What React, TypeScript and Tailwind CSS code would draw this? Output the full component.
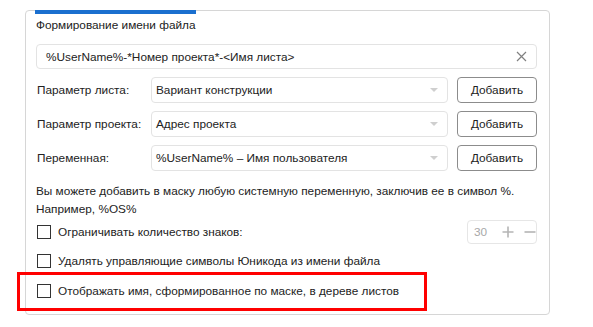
import React from "react";

const font = { fontFamily: '"Liberation Sans", Arial, sans-serif' };

function Combo({ value }: { value: string }) {
  return (
    <div className="flex-1 h-full flex items-center justify-between border border-[#e3e3e3] rounded-[4px] pl-[4px] pr-[9px] bg-white">
      <span>{value}</span>
      <svg width="8" height="4" viewBox="0 0 8 4">
        <path d="M0 0 L8 0 L4 4 Z" fill="#cfcfcf" />
      </svg>
    </div>
  );
}

function Btn() {
  return (
    <div className="w-[80px] h-full flex items-center justify-center border border-[#8c8c8c] rounded-[4px] bg-white">
      Добавить
    </div>
  );
}

function Row({ label, value }: { label: string; value: string }) {
  return (
    <div className="flex items-center h-[26px] mt-[8px]">
      <div className="w-[115px] pl-[1px] whitespace-nowrap">{label}</div>
      <Combo value={value} />
      <div className="w-[9px]" />
      <Btn />
    </div>
  );
}

function Check({ label }: { label: string }) {
  return (
    <div className="flex items-center whitespace-nowrap">
      <div className="w-[14px] h-[14px] border border-[#333] ml-[1px] mr-[7px] bg-white" />
      <span>{label}</span>
    </div>
  );
}

export default function App() {
  return (
    <div className="relative w-[593px] h-[327px] bg-white text-[11.8px] leading-[16px] text-[#222] overflow-hidden" style={font}>
      <div className="h-[10px]" />
      <div className="relative ml-[25px] w-[525px] h-[305px] border border-[#d6d6d6] rounded-[4px] pl-[10px] pr-[12px]">
        <div className="absolute left-[9px] top-[-1px] w-[161px] h-[4px] bg-[#1a6fcf]" />
        <div className="h-[28px] flex items-center">Формирование имени файла</div>
        <div className="mt-[5px] h-[25px] flex items-center justify-between border border-[#e3e3e3] rounded-[4px] pl-[9px] pr-[9px]">
          <span>%UserName%-*Номер проекта*-&lt;Имя листа&gt;</span>
          <svg width="11" height="11" viewBox="0 0 11 11">
            <path d="M1 1 L10 10 M10 1 L1 10" stroke="#808080" strokeWidth="1.2" />
          </svg>
        </div>
        <Row label="Параметр листа:" value="Вариант конструкции" />
        <Row label="Параметр проекта:" value="Адрес проекта" />
        <Row label="Переменная:" value="%UserName% – Имя пользователя" />
        <div className="mt-[11px] leading-[18px] whitespace-nowrap">
          <div>Вы можете добавить в маску любую системную переменную, заключив ее в символ %.</div>
          <div>Например, %OS%</div>
        </div>
        <div className="mt-[2px] h-[24px] flex items-center justify-between">
          <Check label="Ограничивать количество знаков:" />
          <div className="w-[70px] h-[24px] flex items-center border border-[#e6e6e6] rounded-[4px] text-[#a8a8a8] pl-[6px]">
            <span className="w-[24px]">30</span>
            <svg width="12" height="12" viewBox="0 0 12 12" className="ml-[4px]">
              <path d="M6 0.5 V11.5 M0.5 6 H11.5" stroke="#b5b5b5" strokeWidth="1.6" />
            </svg>
            <svg width="12" height="12" viewBox="0 0 12 12" className="ml-[10px]">
              <path d="M0.5 6 H11.5" stroke="#b5b5b5" strokeWidth="1.6" />
            </svg>
          </div>
        </div>
        <div className="mt-[5px] h-[24px] flex items-center">
          <Check label="Удалять управляющие символы Юникода из имени файла" />
        </div>
        <div className="mt-[6px] h-[24px] flex items-center">
          <Check label="Отображать имя, сформированное по маске, в дереве листов" />
        </div>
      </div>
      <div className="absolute left-[17px] top-[272px] w-[410px] h-[39px] border-[3px] border-[#ff0000]" />
    </div>
  );
}
